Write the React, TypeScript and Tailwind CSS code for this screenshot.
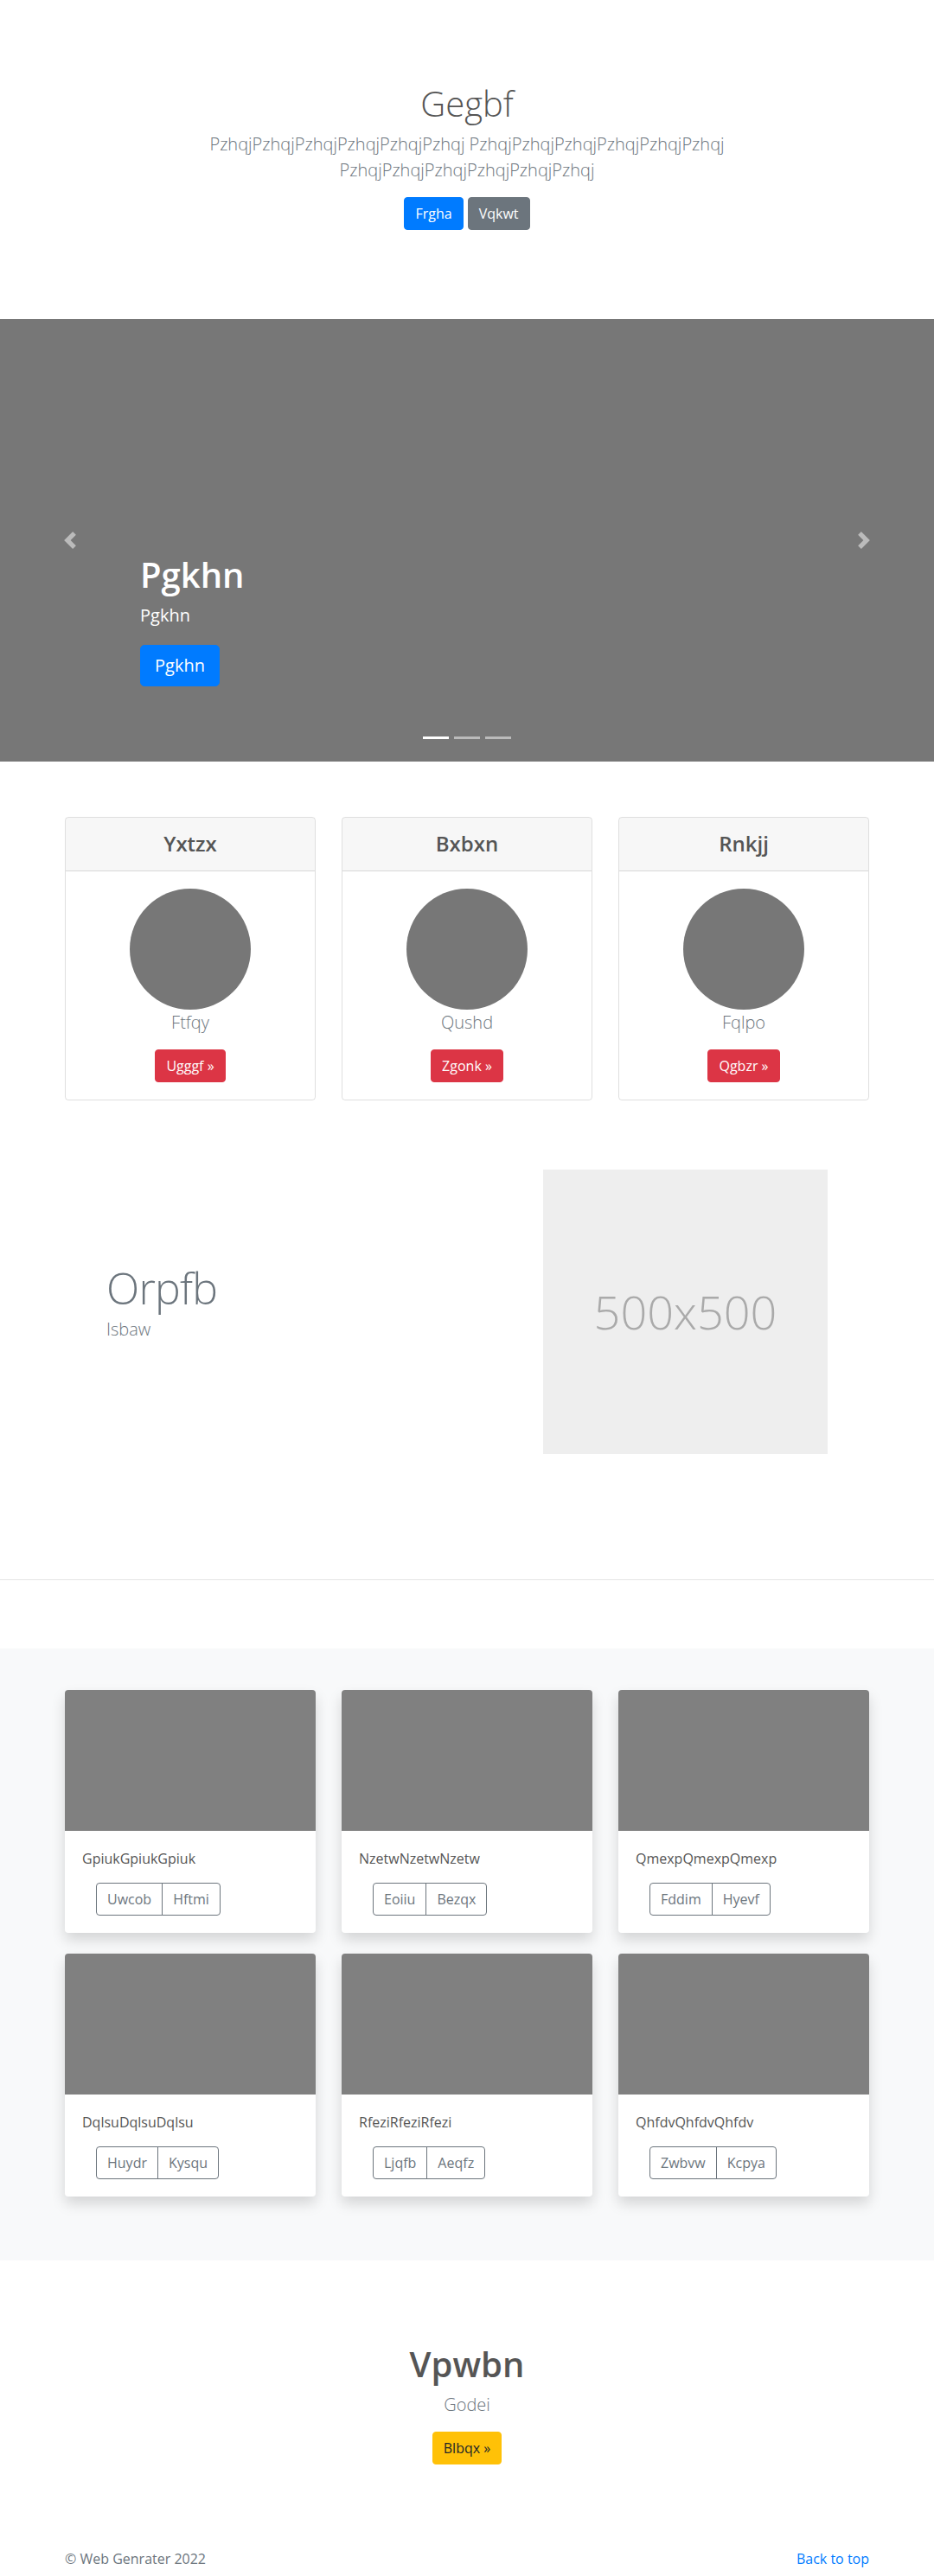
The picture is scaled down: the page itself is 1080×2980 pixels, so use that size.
const pricing = [
  { title: 'Yxtzx', text: 'Ftfqy', cta: 'Ugggf »' },
  { title: 'Bxbxn', text: 'Qushd', cta: 'Zgonk »' },
  { title: 'Rnkjj', text: 'Fqlpo', cta: 'Qgbzr »' },
];

const album = [
  { text: 'GpiukGpiukGpiuk', a: 'Uwcob', b: 'Hftmi' },
  { text: 'NzetwNzetwNzetw', a: 'Eoiiu', b: 'Bezqx' },
  { text: 'QmexpQmexpQmexp', a: 'Fddim', b: 'Hyevf' },
  { text: 'DqlsuDqlsuDqlsu', a: 'Huydr', b: 'Kysqu' },
  { text: 'RfeziRfeziRfezi', a: 'Ljqfb', b: 'Aeqfz' },
  { text: 'QhfdvQhfdvQhfdv', a: 'Zwbvw', b: 'Kcpya' },
];

function Chevron({ dir }: { dir: 'prev' | 'next' }) {
  return (
    <svg width="20" height="20" viewBox="0 0 8 8" fill="#fff">
      {dir === 'prev' ? (
        <path d="M5.25 0l-4 4 4 4 1.5-1.5L4.25 4l2.5-2.5L5.25 0z" />
      ) : (
        <path d="M2.75 0l-1.5 1.5L3.75 4l-2.5 2.5L2.75 8l4-4-4-4z" />
      )}
    </svg>
  );
}

export default function App() {
  return (
    <div className="bg-white text-[#555] font-['Open_Sans','Noto_Sans',sans-serif] text-base leading-normal">
      {/* hero */}
      <section className="pt-24 pb-[103px] text-center">
        <div className="mx-auto max-w-[640px]">
          <h1 className="text-[40px] font-light leading-[1.2] mb-2">Gegbf</h1>
          <p className="text-xl font-light leading-[1.5] text-[#6c757d] mb-4">
            PzhqjPzhqjPzhqjPzhqjPzhqjPzhqj PzhqjPzhqjPzhqjPzhqjPzhqjPzhqj PzhqjPzhqjPzhqjPzhqjPzhqjPzhqj
          </p>
          <div className="flex justify-center gap-[5px] mt-2">
            <a className="px-3 py-1.5 leading-6 rounded border border-[#007bff] bg-[#007bff] text-white">Frgha</a>
            <a className="px-3 py-1.5 leading-6 rounded border border-[#6c757d] bg-[#6c757d] text-white">Vqkwt</a>
          </div>
        </div>
      </section>

      {/* carousel */}
      <section className="relative h-[512px] bg-[#777] mb-16">
        <div className="absolute left-0 top-0 bottom-0 w-[15%] flex items-center justify-center opacity-50">
          <Chevron dir="prev" />
        </div>
        <div className="absolute right-0 top-0 bottom-0 w-[15%] flex items-center justify-center opacity-50">
          <Chevron dir="next" />
        </div>
        <div className="absolute left-[15%] right-[15%] bottom-[87px] text-left text-white">
          <h1 className="text-[40px] font-semibold leading-[1.2] mb-2">Pgkhn</h1>
          <p className="text-xl leading-[30px] mb-[19px]">Pgkhn</p>
          <a className="inline-block px-4 py-2 text-xl leading-[1.5] rounded-[5px] border border-[#007bff] bg-[#007bff] text-white">
            Pgkhn
          </a>
        </div>
        <div className="absolute bottom-[26px] left-1/2 -translate-x-1/2 flex gap-1.5">
          <span className="w-[30px] h-[3px] bg-white" />
          <span className="w-[30px] h-[3px] bg-white/50" />
          <span className="w-[30px] h-[3px] bg-white/50" />
        </div>
      </section>

      {/* pricing cards */}
      <section className="w-[930px] mx-auto grid grid-cols-3 gap-[30px]">
        {pricing.map((p) => (
          <div key={p.title} className="border border-black/[.125] rounded text-center overflow-hidden">
            <div className="py-4 bg-black/[.03] border-b border-black/[.125]">
              <h4 className="text-2xl leading-[1.2] font-semibold">{p.title}</h4>
            </div>
            <div className="p-5">
              <div className="w-[140px] h-[140px] rounded-full bg-[#777] mx-auto" />
              <p className="text-xl font-light leading-[30px] text-[#6c757d] mb-4">{p.text}</p>
              <a className="inline-block px-3 py-1.5 leading-6 rounded border border-[#dc3545] bg-[#dc3545] text-white">
                {p.cta}
              </a>
            </div>
          </div>
        ))}
      </section>

      {/* featurette */}
      <section className="w-[930px] mx-auto mt-20 flex items-center justify-between">
        <div className="pl-12">
          <h2 className="text-[50px] font-light leading-none tracking-[-0.05rem] text-[#6c757d] mb-2">Orpfb</h2>
          <p className="text-xl font-light leading-[30px] text-[#6c757d] mb-4">Isbaw</p>
        </div>
        <div className="mr-12 w-[329px] h-[329px] bg-[#eee] flex items-center justify-center">
          <span className="text-[54px] font-light text-[#aaa]">500x500</span>
        </div>
      </section>

      <hr className="mt-[145px] border-0 border-t border-black/10" />

      {/* album */}
      <section className="mt-[79px] bg-[#f8f9fa] pt-12 pb-[74px]">
        <div className="w-[930px] mx-auto grid grid-cols-3 gap-x-[30px] gap-y-6">
          {album.map((c) => (
            <div key={c.text} className="bg-white rounded overflow-hidden shadow-[0_8px_16px_rgba(0,0,0,0.15)]">
              <div className="h-[163px] bg-[#808080]" />
              <div className="p-5">
                <p className="mb-4">{c.text}</p>
                <div className="ml-4 inline-flex">
                  <a className="px-3 py-1.5 leading-6 border border-[#6c757d] rounded-l text-[#6c757d]">{c.a}</a>
                  <a className="-ml-px px-3 py-1.5 leading-6 border border-[#6c757d] rounded-r text-[#6c757d]">{c.b}</a>
                </div>
              </div>
            </div>
          ))}
        </div>
      </section>

      {/* call to action */}
      <section className="pt-24 pb-[49px] text-center">
        <h1 className="text-[40px] font-semibold leading-[1.2] mb-2">Vpwbn</h1>
        <p className="text-xl font-light leading-[1.5] text-[#6c757d] mb-4">Godei</p>
        <a className="inline-block px-3 py-1.5 leading-6 rounded border border-[#ffc107] bg-[#ffc107] text-[#212529]">
          Blbqx »
        </a>
      </section>

      <footer className="pt-12 pb-12">
        <div className="w-[930px] mx-auto flex justify-between">
          <p className="text-[#6c757d]">© Web Genrater 2022</p>
          <a className="text-[#007bff]">Back to top</a>
        </div>
      </footer>
    </div>
  );
}
